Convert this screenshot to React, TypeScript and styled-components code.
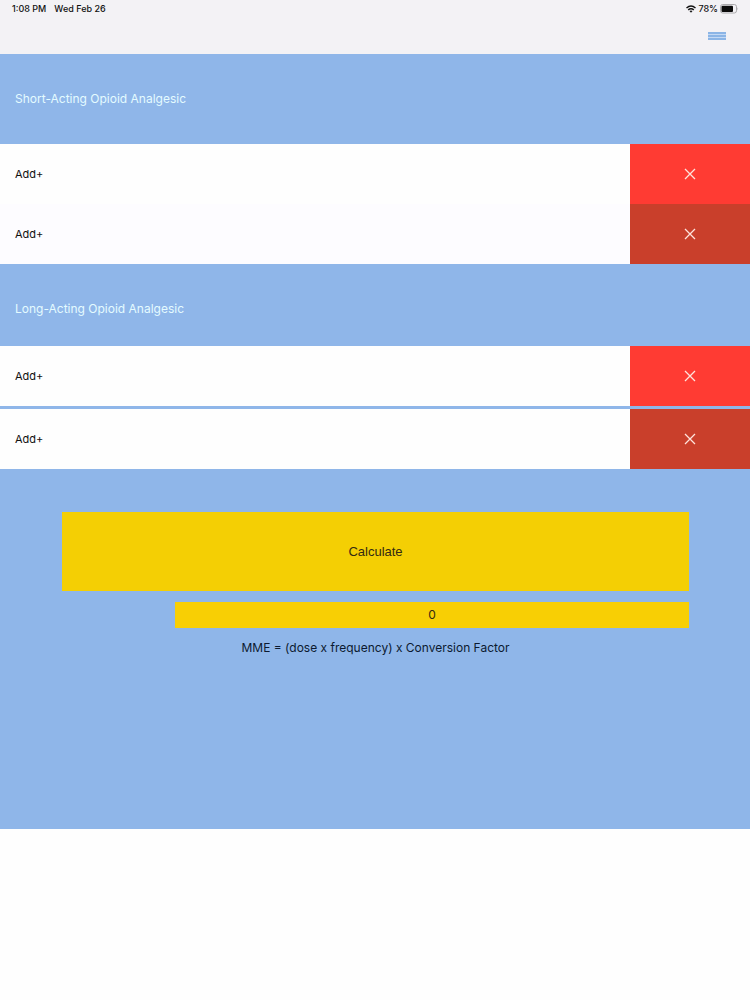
import React from "react";
import styled, { createGlobalStyle } from "styled-components";

const GlobalStyle = createGlobalStyle`
  * { box-sizing: border-box; }
  body {
    margin: 0;
    background: #fefefe;
    color: #111;
    font-family: Inter, "Liberation Sans", sans-serif;
  }
  button { border: 0; margin: 0; padding: 0; font: inherit; color: inherit; cursor: pointer; border-radius: 0; }
`;

const TopBar = styled.header`
  height: 54px;
  background: #f3f2f5;
`;

const StatusBar = styled.div`
  display: flex;
  justify-content: space-between;
  align-items: center;
  height: 18px;
  padding: 0 11px 0 12px;
  font-size: 9px;
  line-height: 12px;
  font-weight: 500;
`;

const StatusGroup = styled.div<{ $gap: number }>`
  display: flex;
  align-items: center;
  gap: ${(p) => p.$gap}px;
`;

const NavBar = styled.nav`
  display: flex;
  justify-content: flex-end;
  align-items: center;
  height: 36px;
  padding-right: 24px;
`;

const MenuButton = styled.button`
  display: flex;
  background: none;
`;

const Page = styled.main`
  background: #8fb6e9;
  padding-bottom: 172px;
`;

const SectionTitle = styled.h2<{ $bottom: number }>`
  margin: 0;
  padding: 36px 15px ${(p) => p.$bottom}px;
  font-size: 12px;
  line-height: 18px;
  font-weight: 400;
  color: #e4fbff;
`;

const RowList = styled.div<{ $gap: number }>`
  display: flex;
  flex-direction: column;
  gap: ${(p) => p.$gap}px;
`;

const Row = styled.div`
  display: flex;
  height: 60px;
`;

const AddButton = styled.button<{ $tinted?: boolean }>`
  flex: 1;
  padding-left: 15px;
  text-align: left;
  font-size: 11px;
  background: ${(p) => (p.$tinted ? "#fdfcff" : "#fefefe")};
`;

const RemoveButton = styled.button<{ $dark?: boolean }>`
  display: flex;
  align-items: center;
  justify-content: center;
  width: 16%;
  background: ${(p) => (p.$dark ? "#c93f2b" : "#ff3b33")};
`;

const Calculator = styled.section`
  display: flex;
  flex-direction: column;
  padding: 43px 61px 0 62px;
`;

const CalculateButton = styled.button`
  height: 79px;
  background: #f4cf04;
  color: #332a12;
  font-family: "Liberation Sans", Arial, sans-serif;
  font-size: 13px;
`;

const Result = styled.output`
  height: 26px;
  margin: 11px 0 0 18%;
  background: #f8cf04;
  color: #332a12;
  font-size: 12px;
  line-height: 26px;
  text-align: center;
`;

const Formula = styled.p`
  margin: 11px 0 0;
  font-size: 12px;
  line-height: 18px;
  text-align: center;
  color: #0c1a30;
`;

const Cross = () => (
  <svg width="12" height="12" viewBox="0 0 12 12" fill="none" stroke="#ffe3dc" strokeWidth="1.3" aria-hidden="true">
    <path d="M1 1l10 10M11 1L1 11" />
  </svg>
);

const Wifi = () => (
  <svg width="10" height="8" viewBox="0 0 10 8" fill="none" stroke="#111" strokeWidth="1.4" aria-hidden="true">
    <path d="M.5 3Q5-.9 9.500 3M2.200 4.900Q5 2.500 7.800 4.900" />
    <path d="M3.500 6Q5 4.900 6.500 6L5 7.700z" fill="#111" stroke="none" />
  </svg>
);

const Battery = () => (
  <svg width="19" height="10" viewBox="0 0 19 10" aria-hidden="true">
    <rect x=".5" y=".5" width="16" height="8.500" rx="2.200" fill="none" stroke="#aaa9ac" />
    <rect x="1.500" y="1.700" width="11.500" height="6.200" rx="1" fill="#0b0b0b" />
    <path d="M17.500 3.200q1.300 1.500 0 3z" fill="#aaa9ac" />
  </svg>
);

type DrugSectionProps = { title: string; titleBottom: number; gap: number; tinted?: boolean };

const DrugSection = ({ title, titleBottom, gap, tinted }: DrugSectionProps) => (
  <section>
    <SectionTitle $bottom={titleBottom}>{title}</SectionTitle>
    <RowList $gap={gap}>
      {[false, true].map((second) => (
        <Row key={String(second)}>
          <AddButton type="button" $tinted={tinted && second}>Add+</AddButton>
          <RemoveButton type="button" $dark={second} aria-label="Remove">
            <Cross />
          </RemoveButton>
        </Row>
      ))}
    </RowList>
  </section>
);

export default function App() {
  return (
    <>
      <GlobalStyle />
      <TopBar>
        <StatusBar>
          <StatusGroup $gap={8}>
            <span>1:08 PM</span>
            <span>Wed Feb 26</span>
          </StatusGroup>
          <StatusGroup $gap={2}>
            <Wifi />
            <span>78%</span>
            <Battery />
          </StatusGroup>
        </StatusBar>
        <NavBar>
          <MenuButton type="button" aria-label="Menu">
            <svg width="18" height="8" viewBox="0 0 18 8" aria-hidden="true">
              <rect width="18" height="8" fill="#c3d9f4" />
              <path d="M0 1h18M0 4h18M0 7h18" stroke="#8bb5e6" strokeWidth="2" />
            </svg>
          </MenuButton>
        </NavBar>
      </TopBar>
      <Page>
        <DrugSection title="Short-Acting Opioid Analgesic" titleBottom={36} gap={0} tinted />
        <DrugSection title="Long-Acting Opioid Analgesic" titleBottom={28} gap={3} />
        <Calculator>
          <CalculateButton type="button">Calculate</CalculateButton>
          <Result>0</Result>
          <Formula>MME = (dose x frequency) x Conversion Factor</Formula>
        </Calculator>
      </Page>
    </>
  );
}
